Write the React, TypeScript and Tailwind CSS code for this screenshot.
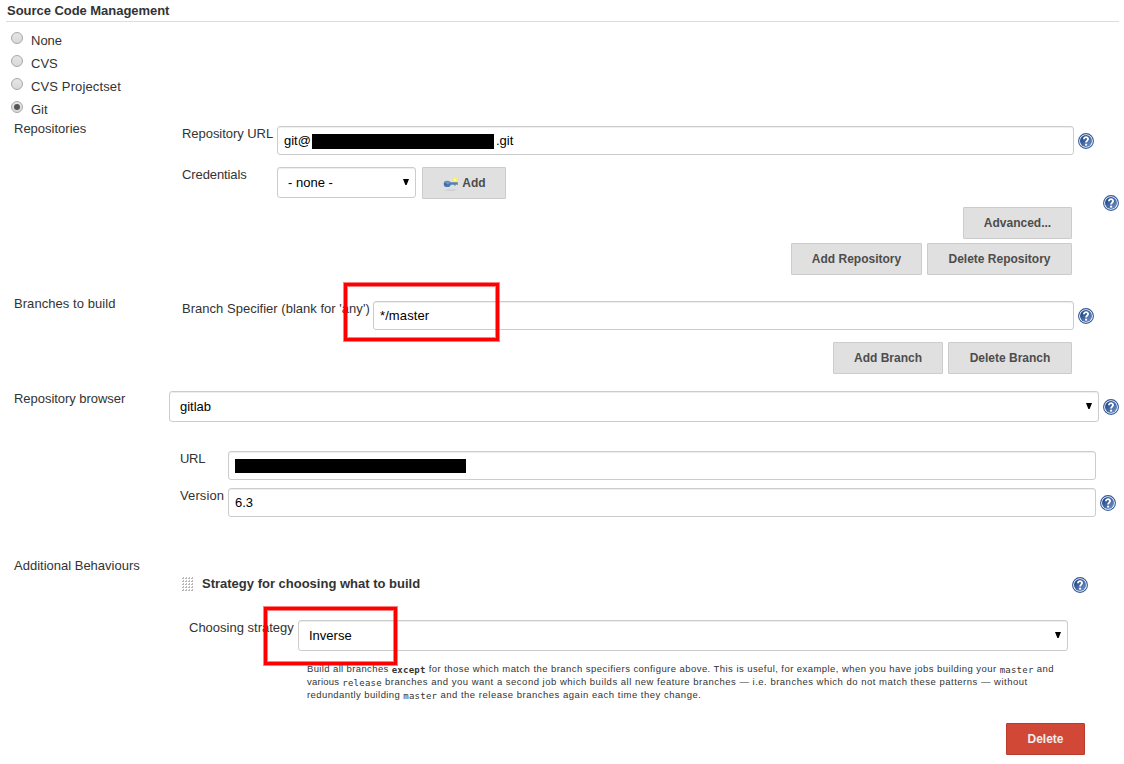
import type { ReactNode } from "react";

function Help({ className = "" }: { className?: string }) {
  return (
    <svg className={`size-4 shrink-0 ${className}`} viewBox="0 0 16 16">
      <defs>
        <linearGradient id="helpFill" x1="0" y1="0" x2="1" y2="1">
          <stop offset="0.1" stopColor="#1d4382" />
          <stop offset="1" stopColor="#7598cd" />
        </linearGradient>
      </defs>
      <circle cx="8" cy="8" r="7.4" fill="#fff" stroke="#33589a" strokeWidth="1.1" />
      <circle cx="8" cy="8" r="6" fill="url(#helpFill)" />
      <path d="M5.9 6.2C5.9 3.5 10.2 3.6 10.1 6.1C10.1 7.6 8.1 7.7 8.1 9.5" fill="none" stroke="#fff" strokeWidth="1.8" />
      <rect x="7.1" y="10.7" width="2" height="1.9" fill="#fff" />
    </svg>
  );
}

function Key() {
  return (
    <svg className="h-4 w-4 shrink-0" viewBox="0 0 16 16">
      <ellipse cx="8.5" cy="15" rx="5.8" ry="0.8" fill="#cdcdcd" />
      <circle cx="13" cy="5.2" r="2.7" fill="#f8ee62" />
      <circle cx="13" cy="4.9" r="1.1" fill="#fffbc0" />
      <path d="M7.5 7.3H15.8V9.9H14.6V9.3H13.8V10.5H12.2V9.7H7.5Z" fill="#5680b8" />
      <ellipse cx="5.2" cy="8.9" rx="3.5" ry="3.2" fill="#4b78b5" />
      <ellipse cx="5.4" cy="7.7" rx="2.4" ry="1.4" fill="#7199cf" />
      <circle cx="3.7" cy="9" r="0.8" fill="#2f568d" />
    </svg>
  );
}

function Button({ children, className = "" }: { children: ReactNode; className?: string }) {
  return (
    <button
      className={`flex h-8 shrink-0 items-center justify-center rounded-[1px] border border-[#ccc] bg-[#e0e0e0] text-[12px] font-bold whitespace-nowrap text-[#4d4d4d] ${className}`}
    >
      {children}
    </button>
  );
}

function Field({ children, className = "" }: { children?: ReactNode; className?: string }) {
  return (
    <div
      className={`flex h-[29px] shrink-0 items-center rounded-[3px] border border-[#ccc] bg-white pl-1.5 whitespace-nowrap text-black shadow-[inset_0_1px_1px_rgba(0,0,0,0.075)] ${className}`}
    >
      {children}
    </div>
  );
}

function Select({ children, className = "" }: { children: ReactNode; className?: string }) {
  return (
    <div
      className={`flex h-[31px] shrink-0 items-center justify-between rounded-[3px] border border-[#ccc] bg-white pr-[6px] pl-2.5 whitespace-nowrap text-black shadow-[inset_0_1px_1px_rgba(0,0,0,0.075)] ${className}`}
    >
      <span>{children}</span>
      <svg className="mb-[2px] h-[6px] w-[6px]" viewBox="0 0 6 6">
        <path d="M0 0H6L3.6 6H2.4Z" fill="#000" />
      </svg>
    </div>
  );
}

function Label({ children, className = "" }: { children: ReactNode; className?: string }) {
  return <span className={`shrink-0 leading-4 whitespace-nowrap ${className}`}>{children}</span>;
}

function Radio({ checked, children }: { checked?: boolean; children: ReactNode }) {
  return (
    <div className="flex h-[23px] pl-[11px]">
      <svg className="mt-1 size-3 shrink-0" viewBox="0 0 12 12">
        <defs>
          <linearGradient id="radioFill" x1="0" y1="0" x2="0" y2="1">
            <stop offset="0" stopColor="#e6e6e6" />
            <stop offset="1" stopColor="#d8d8d8" />
          </linearGradient>
        </defs>
        <circle cx="6" cy="6" r="5.5" fill="url(#radioFill)" stroke="#a8a8a8" />
        {checked && <circle cx="6" cy="6" r="3" fill="#555" />}
      </svg>
      <Label className="mt-[5px] ml-2">{children}</Label>
    </div>
  );
}

function Code({ children, className = "" }: { children: ReactNode; className?: string }) {
  return (
    <span className={`relative top-px font-['DejaVu_Sans_Mono',monospace] text-[9px] leading-none tracking-[0.24px] ${className}`}>
      {children}
    </span>
  );
}

export default function App() {
  return (
    <div className="relative h-[764px] w-[1124px] overflow-hidden bg-white font-['Liberation_Sans',sans-serif] text-[13px] leading-4 text-[#333]">
      <h2 className="mr-[5px] ml-[6px] h-[22px] border-b border-[#ddd] pt-[3px] pl-px font-bold tracking-[-0.04px] whitespace-nowrap">
        Source Code Management
      </h2>

      <div className="mt-[6px] h-[92px]">
        <Radio>None</Radio>
        <Radio>CVS</Radio>
        <Radio><span className="tracking-[0.13px]">CVS Projectset</span></Radio>
        <Radio checked>Git</Radio>
      </div>

      <section className="flex h-[175px]">
        <Label className="w-[168px] pt-px pl-[14px]">Repositories</Label>
        <div className="w-[912px] shrink-0 pt-[6px] pl-[14px]">
          <div className="flex h-[41px]">
            <Label className="w-[95px] tracking-[-0.05px]">Repository URL</Label>
            <Field className="w-[797px]">
              <span className="w-7">git@</span>
              <span className="mt-[2px] h-[15px] w-[182px] bg-black" />
              <span className="ml-[2px]">.git</span>
            </Field>
            <Help className="mt-[7px] ml-1" />
          </div>
          <div className="flex h-10">
            <Label className="w-[95px] tracking-[-0.1px]">Credentials</Label>
            <Select className="w-[139px]">- none -</Select>
            <Button className="ml-[6px] w-[84px] gap-1">
              <Key />
              <span>Add</span>
            </Button>
          </div>
          <div className="flex h-9 justify-end pr-2">
            <Button className="w-[109px]">Advanced...</Button>
          </div>
          <div className="flex justify-end gap-[5px] pr-2">
            <Button className="w-[131px]">Add Repository</Button>
            <Button className="w-[145px]">Delete Repository</Button>
          </div>
        </div>
        <Help className="mt-[75px] ml-[23px]" />
      </section>

      <section className="flex h-[95px]">
        <Label className="w-[168px] pt-px pl-[14px] tracking-[0.06px]">Branches to build</Label>
        <div className="w-[912px] shrink-0 pt-[6px] pl-[14px]">
          <div className="flex h-[41px]">
            <Label className="w-[191px] tracking-[0.02px]">Branch Specifier (blank for 'any')</Label>
            <Field className="w-[701px]"><span className="tracking-[0.1px]">*/master</span></Field>
            <Help className="mt-[7px] ml-1" />
          </div>
          <div className="flex justify-end gap-[5px] pr-2">
            <Button className="w-[110px]">Add Branch</Button>
            <Button className="w-[124px]">Delete Branch</Button>
          </div>
        </div>
      </section>

      <section className="flex h-[167px]">
        <Label className="w-[169px] pt-px pl-[14px] tracking-[-0.04px]">Repository browser</Label>
        <div className="pt-px">
          <div className="flex h-[60px]">
            <Select className="w-[930px]">gitlab</Select>
            <Help className="mt-2 ml-1" />
          </div>
          <div className="flex h-[37px] pl-[11px]">
            <Label className="w-[48px] tracking-[-0.3px]">URL</Label>
            <Field className="w-[868px]">
              <span className="h-[14px] w-[231px] bg-black" />
            </Field>
          </div>
          <div className="flex pl-[11px]">
            <Label className="w-[48px] tracking-[0.1px]">Version</Label>
            <Field className="w-[868px]">6.3</Field>
            <Help className="mt-[7px] ml-1" />
          </div>
        </div>
      </section>

      <section className="flex">
        <Label className="w-[168px] pt-px pl-[14px]">Additional Behaviours</Label>
        <div className="w-[920px] shrink-0 pt-[18px]">
          <div className="flex h-[45px] pl-[14px]">
            <svg className="mt-[2px] h-[15px] w-3 shrink-0" viewBox="0 0 12 15">
              <defs>
                <pattern id="grip" width="3" height="3" patternUnits="userSpaceOnUse">
                  <path d="M0 1h1v-1h1v2h-2z" fill="#b8b8b8" />
                </pattern>
              </defs>
              <rect width="12" height="15" fill="url(#grip)" />
            </svg>
            <Label className="ml-2 w-[870px] pt-px font-bold">Strategy for choosing what to build</Label>
            <Help className="mt-[2px]" />
          </div>
          <div className="flex h-[42px] pl-[21px]">
            <Label className="w-[109px]">Choosing strategy</Label>
            <Select className="w-[770px]">Inverse</Select>
          </div>
          <div className="h-[61px] pl-[139px] text-[9.5px] leading-[13px] whitespace-nowrap">
            <p className="h-[13px]">
              <span className="tracking-[0.37px]">Build all branches </span>
              <Code className="font-bold">except</Code>
              <span className="tracking-[0.44px]"> for those which match the branch specifiers configure above. This is useful, for example, when you have jobs building your </span>
              <Code>master</Code>
              <span className="tracking-[0.5px]"> and</span>
            </p>
            <p className="h-[13px]">
              <span className="tracking-[0.25px]">various </span>
              <Code>release</Code>
              <span className="tracking-[0.5px]"> branches and you want a second job which builds all new feature branches — i.e. branches which do not match these patterns — without</span>
            </p>
            <p className="h-[13px]">
              <span className="tracking-[0.41px]">redundantly building </span>
              <Code>master</Code>
              <span className="tracking-[0.51px]"> and the release branches again each time they change.</span>
            </p>
          </div>
          <div className="flex justify-end pr-[3px]">
            <button className="h-8 w-[79px] rounded-[1px] border border-[#b93b2c] bg-[#d14836] text-[12px] font-bold text-[#eee]">Delete</button>
          </div>
        </div>
      </section>

      <div className="absolute top-[283px] left-[344px] h-[58px] w-[155px] border-3 border-[#ff0000] shadow-[0_0_0_1px_rgba(255,0,0,0.5),inset_0_0_0_1px_rgba(255,0,0,0.5)]" />
      <div className="absolute top-[607px] left-[264px] h-[58px] w-[133px] border-3 border-[#ff0000] shadow-[0_0_0_1px_rgba(255,0,0,0.5),inset_0_0_0_1px_rgba(255,0,0,0.5)]" />
    </div>
  );
}
